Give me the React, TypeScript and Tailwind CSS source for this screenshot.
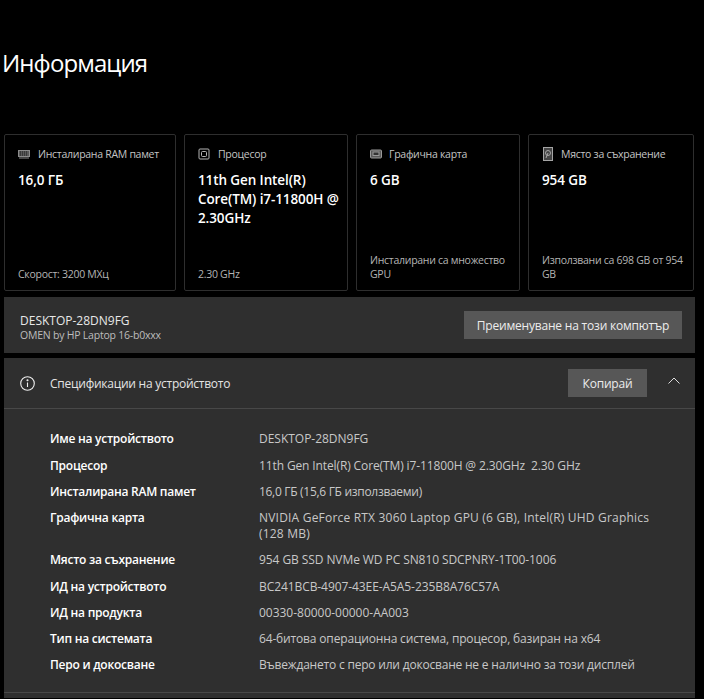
import React from "react";

const font = "font-['Open_Sans','Noto_Sans',sans-serif]";

function RamIcon() {
  return (
    <svg width="12" height="12" viewBox="0 0 12 12" fill="none" stroke="#8c8c8c" strokeWidth="1">
      <rect x="0.5" y="2.5" width="11" height="6" fill="#5a5a5a" />
      <path d="M2.5 3v5M4.5 3v5M6.5 3v5M8.5 3v5" stroke="#3a3a3a" />
      <path d="M1 10h10" />
    </svg>
  );
}
function CpuIcon() {
  return (
    <svg width="12" height="12" viewBox="0 0 12 12" fill="none" stroke="#b5b5b5" strokeWidth="1">
      <rect x="1" y="1" width="10" height="10" rx="1" />
      <rect x="3.5" y="3.5" width="5" height="5" rx="1" />
    </svg>
  );
}
function GpuIcon() {
  return (
    <svg width="12" height="12" viewBox="0 0 12 12" fill="none" stroke="#9a9a9a" strokeWidth="1">
      <rect x="0.5" y="2" width="11" height="8" rx="1" fill="#5a5a5a" />
      <rect x="3" y="4" width="6" height="3.5" fill="#333" />
    </svg>
  );
}
function DiskIcon() {
  return (
    <svg width="12" height="14" viewBox="0 0 12 14" fill="none" stroke="#a5a5a5" strokeWidth="1">
      <rect x="1.5" y="0.5" width="9" height="13" fill="#444" />
      <circle cx="6" cy="6" r="2.5" />
      <path d="M6 6l-2 5" />
    </svg>
  );
}

type CardProps = { w: string; icon: React.ReactNode; label: string; value: string; foot: string; gap: string };
function Card({ w, icon, label, value, foot, gap }: CardProps) {
  return (
    <div className={`${w} h-[157px] shrink-0 border border-[#2e2e2e] rounded-[2px] pl-[13px] pr-[5px] pt-[11px] pb-[9px] flex flex-col justify-between`}>
      <div>
        <div className={`flex items-center ${gap} h-[16px]`}>
          <span className="w-[12px] flex justify-center shrink-0">{icon}</span>
          <span className="text-[10.5px] leading-[16px] tracking-[-0.28px] text-[#c4c4c4] whitespace-nowrap">{label}</span>
        </div>
        <div className="mt-[9px] text-[13.5px] leading-[19px] font-semibold tracking-[-0.1px] text-white">{value}</div>
      </div>
      <div className="text-[10.5px] leading-[14px] tracking-[-0.28px] text-[#b4b4b4]">{foot}</div>
    </div>
  );
}

function Row({ k, v, h, track }: { k: string; v: string; h: string; track: string }) {
  return (
    <div className={`flex ${h}`}>
      <div className="w-[209px] shrink-0 text-[12px] leading-[16px] font-semibold tracking-[-0.25px] text-white">{k}</div>
      <div className={`w-[400px] text-[12px] leading-[16px] text-[#c8c8c8] ${track}`}>{v}</div>
    </div>
  );
}

export default function App() {
  return (
    <div className={`${font} w-[704px] h-[699px] bg-black overflow-hidden`}>
      <div className="pl-[2px] pt-[46px] h-[134px]">
        <h1 className="text-[24px] leading-[34px] font-normal tracking-[-0.9px] text-white">Информация</h1>
      </div>

      <div className="flex gap-[8px] pl-[4px]">
        <Card w="w-[172px]" gap="gap-[8px]" icon={<RamIcon />} label="Инсталирана RAM памет" value="16,0 ГБ" foot="Скорост: 3200 МХц" />
        <Card w="w-[164px]" gap="gap-[8px]" icon={<CpuIcon />} label="Процесор" value="11th Gen Intel(R) Core(TM) i7-11800H @ 2.30GHz" foot="2.30 GHz" />
        <Card w="w-[164px]" gap="gap-[7px]" icon={<GpuIcon />} label="Графична карта" value="6 GB" foot="Инсталирани са множество GPU" />
        <Card w="w-[166px]" gap="gap-[7px]" icon={<DiskIcon />} label="Място за съхранение" value="954 GB" foot="Използвани са 698 GB от 954 GB" />
      </div>

      <div className="mt-[6px] ml-[4px] w-[691px] h-[56px] bg-[#2f2f2f] flex items-center justify-between pl-[16px] pr-[13px]">
        <div className="pt-[5px]">
          <div className="text-[12px] leading-[15px] text-[#e8e8e8]">DESKTOP-28DN9FG</div>
          <div className="text-[10.5px] leading-[14px] tracking-[-0.22px] text-[#bdbdbd]">OMEN by HP Laptop 16-b0xxx</div>
        </div>
        <button className="w-[218px] h-[28px] bg-[#575757] text-[12px] tracking-[-0.2px] pt-[1px] text-[#ececec]">Преименуване на този компютър</button>
      </div>

      <div className="mt-[5px] ml-[4px] w-[691px] h-[340px] bg-[#2f2f2f]">
        <div className="h-[51px] border-b border-[#484848] flex items-center pl-[16px] pr-[15px]">
          <svg width="15" height="15" viewBox="0 0 15 15" fill="none" stroke="#f0f0f0" strokeWidth="1.1" className="shrink-0 mt-[1px]">
            <circle cx="7.5" cy="7.5" r="6.8" />
            <path d="M7.5 6.5v4.5" />
            <circle cx="7.5" cy="4.3" r="0.5" fill="#f0f0f0" />
          </svg>
          <span className="ml-[15px] pt-[2px] text-[12px] tracking-[-0.25px] text-[#e4e4e4]">Спецификации на устройството</span>
          <button className="ml-auto w-[79px] h-[28px] bg-[#575757] text-[12px] tracking-[-0.2px] pt-[2px] text-[#ececec]">Копирай</button>
          <svg width="12" height="7" viewBox="0 0 12 7" fill="none" stroke="#dcdcdc" strokeWidth="1" className="ml-[21px] mb-[6px] shrink-0">
            <path d="M0.5 6.5l5.5-5.5 5.5 5.5" />
          </svg>
        </div>
        <div className="pl-[46px] pt-[22px] h-[284px] border-b border-[#484848]">
          <Row h="h-[26.7px]" track="tracking-[-0.02px]" k="Име на устройството" v="DESKTOP-28DN9FG" />
          <Row h="h-[26.2px]" track="tracking-[-0.12px]" k="Процесор" v="11th Gen Intel(R) Core(TM) i7-11800H @ 2.30GHz&nbsp;&nbsp;2.30 GHz" />
          <Row h="h-[26.2px]" track="tracking-[-0.3px]" k="Инсталирана RAM памет" v="16,0 ГБ (15,6 ГБ използваеми)" />
          <Row h="h-[42.4px]" track="tracking-[0.2px]" k="Графична карта" v="NVIDIA GeForce RTX 3060 Laptop GPU (6 GB), Intel(R) UHD Graphics (128 MB)" />
          <Row h="h-[26.2px]" track="tracking-[-0.08px]" k="Място за съхранение" v="954 GB SSD NVMe WD PC SN810 SDCPNRY-1T00-1006" />
          <Row h="h-[26.2px]" track="tracking-[-0.08px]" k="ИД на устройството" v="BC241BCB-4907-43EE-A5A5-235B8A76C57A" />
          <Row h="h-[26.2px]" track="tracking-[-0.02px]" k="ИД на продукта" v="00330-80000-00000-AA003" />
          <Row h="h-[26.2px]" track="tracking-[-0.16px]" k="Тип на системата" v="64-битова операционна система, процесор, базиран на x64" />
          <Row h="h-[26.2px]" track="tracking-[-0.2px]" k="Перо и докосване" v="Въвеждането с перо или докосване не е налично за този дисплей" />
        </div>
      </div>
    </div>
  );
}
